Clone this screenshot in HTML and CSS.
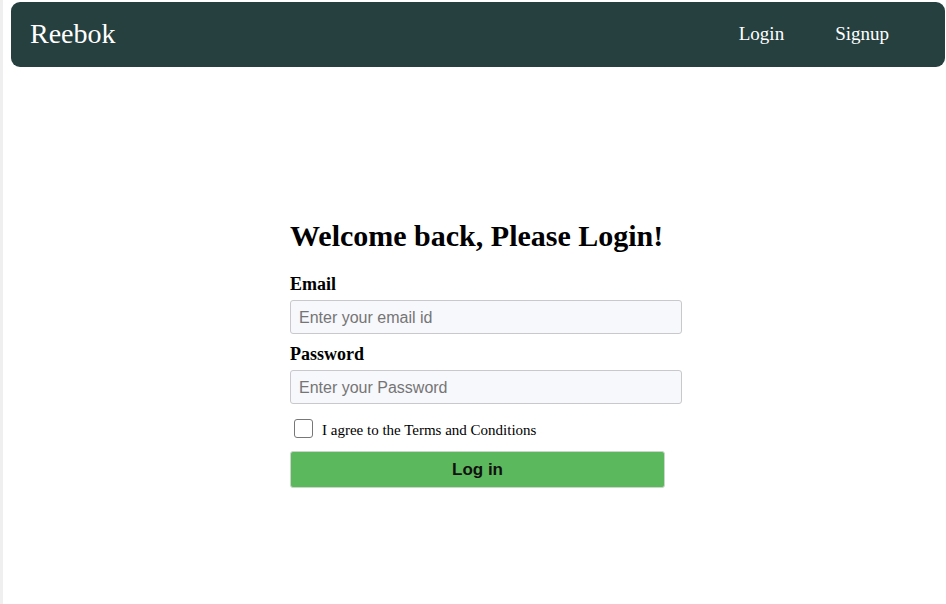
FILE: index.html
```html
<!DOCTYPE html>
<html>
<head>
<meta charset="utf-8">
<link rel="stylesheet" href="styles.css">
</head>
<body>
<div class="page">
  <nav class="navbar">
    <div class="brand">Reebok</div>
    <div class="links">
      <a class="link">Login</a>
      <a class="link">Signup</a>
    </div>
  </nav>
  <main class="main">
    <form class="form">
      <h1 class="title">Welcome back, Please Login!</h1>
      <label class="label">Email</label>
      <input class="input" type="text" placeholder="Enter your email id">
      <label class="label">Password</label>
      <input class="input" type="password" placeholder="Enter your Password">
      <div class="check-row">
        <span class="checkbox"></span>
        <span class="check-text">I agree to the Terms and Conditions</span>
      </div>
      <button class="btn" type="button">Log in</button>
    </form>
  </main>
</div>
</body>
</html>
```
FILE: styles.css
```css
html, body {
  margin: 0;
  padding: 0;
  background: #fff;
}
body {
  font-family: "Liberation Serif", "Times New Roman", serif;
  border-left: 3px solid #efefef;
  min-height: 604px;
  box-sizing: border-box;
}
.page {
  padding: 2px 1px 0 8px;
}
.navbar {
  height: 65px;
  background: #264040;
  border-radius: 9px;
  display: flex;
  align-items: center;
  justify-content: space-between;
  padding: 0 56px 0 19px;
  color: #fff;
}
.brand {
  font-size: 28px;
  margin-top: -2px;
}
.links {
  display: flex;
  gap: 51px;
}
.link {
  font-size: 19px;
  color: #fff;
  margin-top: -2px;
}
.main {
  padding-left: 279px;
  padding-top: 150px;
}
.form {
  width: 392px;
  display: flex;
  flex-direction: column;
  align-items: flex-start;
}
.title {
  font-size: 30px;
  font-weight: bold;
  margin: 0 0 18px;
  line-height: 38px;
}
.label {
  font-size: 18px;
  font-weight: bold;
  line-height: 22px;
  margin-bottom: 5px;
}
.input {
  box-sizing: border-box;
  width: 392px;
  height: 34px;
  background: #f7f8fc;
  border: 1px solid #c9c9cc;
  border-radius: 3px;
  padding: 2px 8px 0;
  font-family: "Liberation Sans", Arial, sans-serif;
  font-size: 16px;
  margin: 0 0 9px;
  outline: none;
}
.input::placeholder {
  color: #757575;
}
.check-row {
  display: flex;
  align-items: center;
  margin: 5px 0 12px 4px;
}
.checkbox {
  box-sizing: border-box;
  width: 19px;
  height: 19px;
  border: 1px solid #777;
  border-radius: 3px;
  background: #fff;
}
.check-text {
  font-size: 15px;
  margin-left: 9px;
  margin-top: 4px;
}
.btn {
  box-sizing: border-box;
  width: 375px;
  height: 37px;
  background: #5cb85c;
  border: 1px solid #c9d6c9;
  border-radius: 3px;
  font-family: "Liberation Sans", Arial, sans-serif;
  font-weight: bold;
  font-size: 17px;
  color: #111;
  padding: 0;
}
```
